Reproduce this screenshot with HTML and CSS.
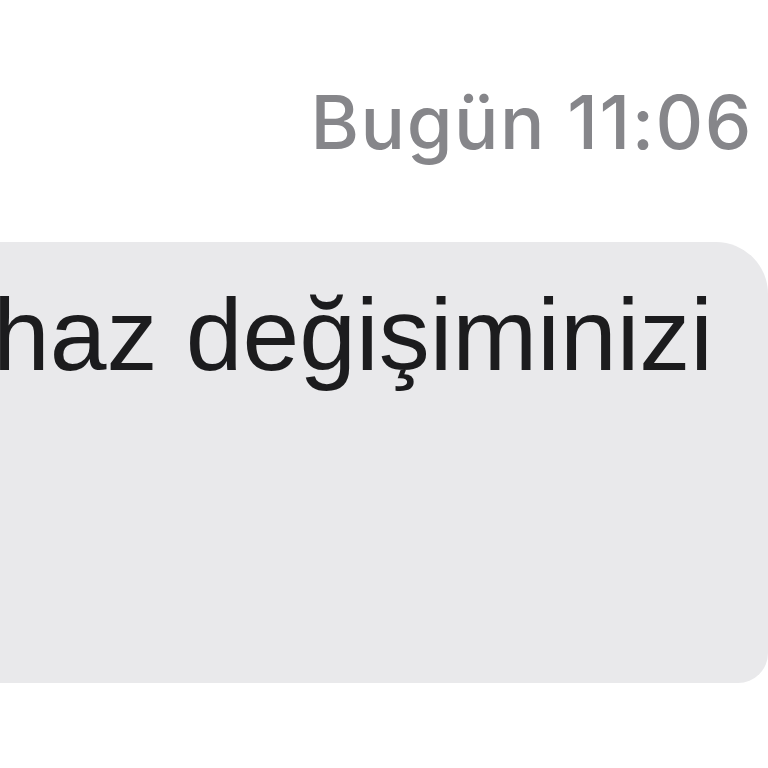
FILE: index.html
```html
<!DOCTYPE html>
<html lang="tr">
<head>
<meta charset="utf-8">
<link rel="stylesheet" href="styles.css">
</head>
<body>
<div class="screen">
  <div class="time">Bugün 11:06</div>
  <div class="row">
    <div class="bubble">
      <p class="msg">haz değişiminizi</p>
    </div>
  </div>
</div>
</body>
</html>
```
FILE: styles.css
```css
html, body {
  margin: 0;
  padding: 0;
  background: #ffffff;
}
body {
  width: 768px;
  height: 768px;
  overflow: hidden;
}
.screen {
  display: flex;
  flex-direction: column;
  width: 768px;
}
.time {
  text-align: right;
  font-family: Inter, "Liberation Sans", sans-serif;
  font-weight: 500;
  font-size: 74px;
  line-height: 1;
  color: #86868a;
  padding: 85px 15px 0 0;
  letter-spacing: 1.5px;
}
.row {
  display: flex;
  margin-top: 83px;
}
.bubble {
  margin-left: -200px;
  width: 968px;
  height: 441px;
  background: #e9e9eb;
  border-radius: 0 52px 30px 0;
  box-sizing: border-box;
  padding: 32px 0 0 0;
}
.msg {
  margin: 0;
  padding-left: 193px;
  font-family: "Liberation Sans", Arial, sans-serif;
  font-weight: 400;
  font-size: 102px;
  line-height: 1.2;
  color: #1c1c1e;
  white-space: nowrap;
}
```
